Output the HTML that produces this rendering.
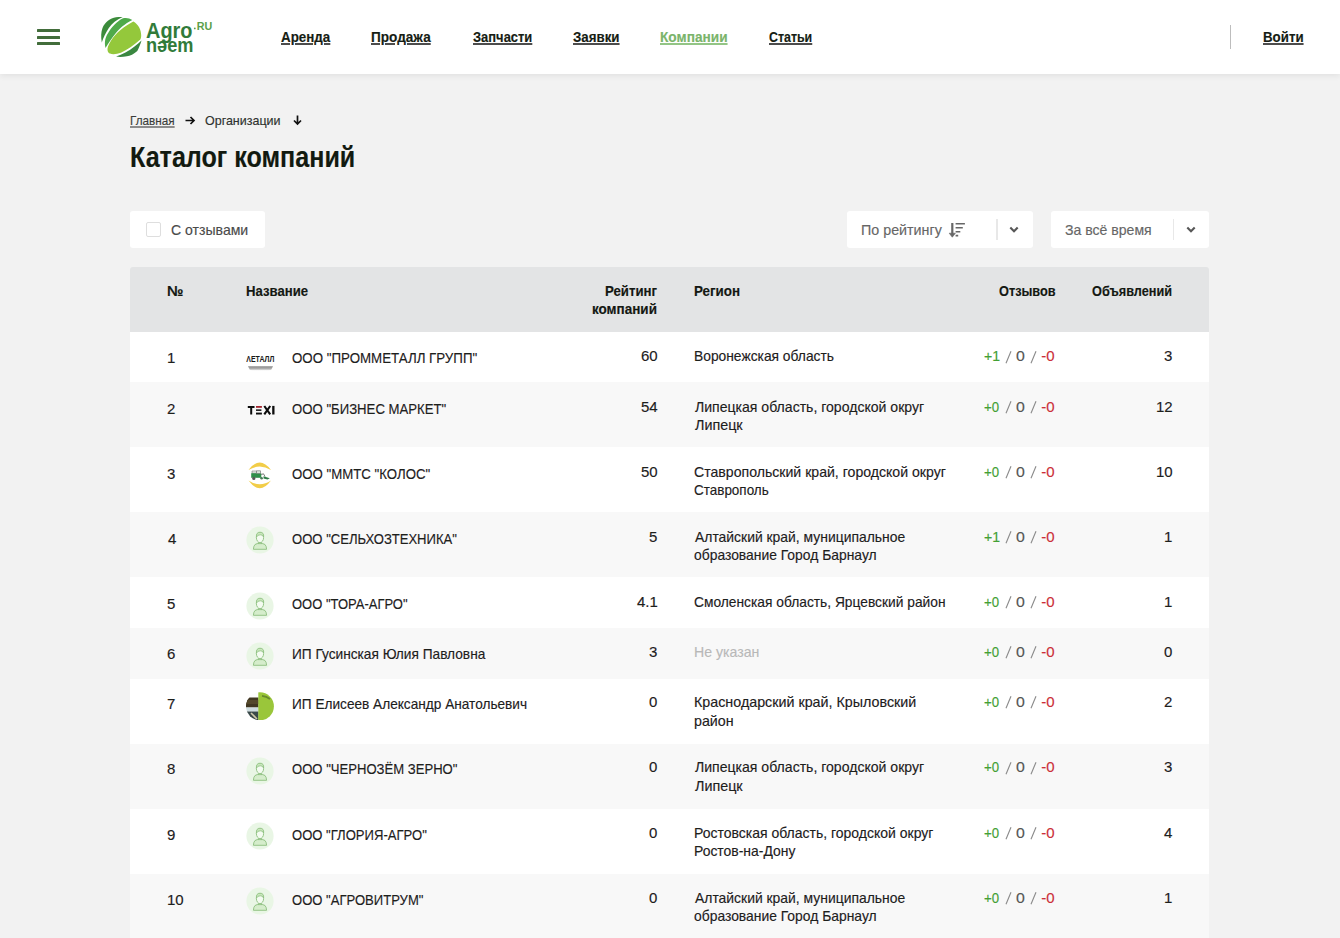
<!DOCTYPE html>
<html><head><meta charset="utf-8">
<style>
*{box-sizing:border-box;margin:0;padding:0}
html,body{width:1340px;height:938px;overflow:hidden}
body{background:#f2f2f2;font-family:"Liberation Sans",sans-serif;color:#1b1f1a;position:relative}
.hdr{position:absolute;left:0;top:0;width:1340px;height:74px;background:#fff;box-shadow:0 2px 6px rgba(0,0,0,.07)}
.burger{position:absolute;left:37px;width:23px;height:3px;background:#426d3b;border-radius:0.5px}
.vdiv{position:absolute;left:1230px;top:25px;width:1px;height:24px;background:#bdbdbd}
.abs{position:absolute;white-space:nowrap}
.abs svg,.icw svg{display:block}
.t{position:absolute;white-space:nowrap;line-height:1;font-family:"Liberation Sans",sans-serif;-webkit-text-stroke:0.15px currentColor}
.nav{text-decoration:underline;text-decoration-thickness:1.5px;text-underline-offset:1px;text-decoration-color:#4c4c4c}
.bcu{text-decoration:underline;text-decoration-color:#8c8c8c;text-decoration-thickness:1.5px;text-underline-offset:1px}
.box{position:absolute;background:#fff;border-radius:3px}
.th{position:absolute;left:130px;top:267px;width:1079px;height:65px;background:#e3e4e5;border-radius:3px 3px 0 0}
.rowbg{position:absolute;left:130px;width:1079px}
.icw{position:absolute;width:28px;height:28px}
.ico{position:absolute;left:0;top:0}
.sl{position:absolute;display:block}
</style></head><body>
<div class="hdr">
  <div class="burger" style="top:29px"></div>
  <div class="burger" style="top:36px"></div>
  <div class="burger" style="top:42px"></div>
<svg width="125" height="55" viewBox="95 10 125 55" style="position:absolute;left:95px;top:10px;display:block">
<path d="M101.8,42.5 C100.8,37 101,32 102.5,28 C105,22 110,18.5 116,17.3 C118.5,16.9 120.8,16.9 122.7,17 C116.5,19.5 112,23.5 108.8,28 C105.5,33 103.5,37.5 101.8,42.5 Z" fill="#3b8b3b"/>
<path d="M105.5,48 C104.2,42 105.2,37.5 108,33.3 C111,28 116.5,21.5 123,18.3 C126.5,17.3 129.5,18.3 132.3,20.1 C124.5,24 119.5,28.5 115.7,33.3 C112,38 108.5,43 105.5,48 Z" fill="#4faa4a"/>
<path d="M133.3,21.6 C138,24 141.5,30 141.2,36 C141.1,37.5 140.8,38.6 140.3,39.4 C134,45 127,50 120.9,52.7 C117,54.2 112.5,54.6 110,53.6 C107.5,52.6 107,49.5 108,46.5 C111,39 118,30.5 127.4,25 C129.3,23.8 131.3,22.6 133.3,21.6 Z" fill="#94c83b"/>
<path d="M141.5,40.6 C140.5,44 139,48 137.3,50.9 C134,54 130,55.8 126.9,56.3 C123,57 119,57.2 116.1,56.6 C122,54.5 129,51 134.5,46.5 C137,44.5 139.5,42.5 141.5,40.6 Z" fill="#3a8740"/>
<text x="146" y="37.8" font-family="Liberation Sans" font-weight="bold" font-size="21.5" fill="#317b3a" textLength="46.5" lengthAdjust="spacingAndGlyphs">Agro</text>
<text x="146" y="52.4" font-family="Liberation Sans" font-weight="bold" font-size="20.5" fill="#317b3a" textLength="47.5" lengthAdjust="spacingAndGlyphs">n&#x259;em</text>
<circle cx="194.8" cy="28.4" r="0.9" fill="#5aa04a"/>
<text x="196.8" y="29.5" font-family="Liberation Sans" font-weight="bold" font-size="11.5" fill="#5aa04a" textLength="15.5" lengthAdjust="spacingAndGlyphs">RU</text>
</svg>
  <div class="vdiv"></div>
</div>
<div class="abs" style="left:185px;top:115.5px"><svg width="11" height="9" viewBox="0 0 11 9"><path d="M0.5 4.5 H9 M5.5 1 L9 4.5 L5.5 8" fill="none" stroke="#111" stroke-width="1.7"/></svg></div>
<div class="abs" style="left:292.5px;top:114.5px"><svg width="9" height="11" viewBox="0 0 9 11"><path d="M4.5 0.5 V9 M1 5.5 L4.5 9 L8 5.5" fill="none" stroke="#111" stroke-width="1.7"/></svg></div>

<div class="box" style="left:130px;top:211px;width:135px;height:37px">
  <div class="abs" style="left:16px;top:11px;width:15px;height:15px;border:1px solid #dedede;border-radius:2px"></div>
</div>
<div class="box" style="left:847px;top:211px;width:186px;height:37px">
  <div class="abs" style="left:100.5px;top:11px"><svg width="18" height="18" viewBox="0 0 18 18"><path d="M4.3 1 V12" stroke="#676767" stroke-width="2.2"/><path d="M1.2 11.2 L7.4 11.2 L4.3 15.2 Z" fill="#676767" stroke="#676767" stroke-width="0.6" stroke-linejoin="round"/>
<path d="M7.6 1.7 H16.9 M7.6 5.7 H14.8 M7.6 9.7 H12.3 M7.6 13.6 H10.2" stroke="#676767" stroke-width="1.6"/></svg></div>
  <div class="abs" style="left:149px;top:8px;width:1.5px;height:21px;background:#e8e8e8"></div>
  <div class="abs" style="left:162px;top:15px"><svg width="10" height="8" viewBox="0 0 10 8"><path d="M1.3 1.6 L5 5.3 L8.7 1.6" fill="none" stroke="#575757" stroke-width="2.1"/></svg></div>
</div>
<div class="box" style="left:1051px;top:211px;width:158px;height:37px">
  <div class="abs" style="left:121.5px;top:8px;width:1.5px;height:21px;background:#e8e8e8"></div>
  <div class="abs" style="left:135px;top:15px"><svg width="10" height="8" viewBox="0 0 10 8"><path d="M1.3 1.6 L5 5.3 L8.7 1.6" fill="none" stroke="#575757" stroke-width="2.1"/></svg></div>
</div>

<div class="th"></div>
<div class="rowbg" style="top:332px;height:50px;background:#ffffff"></div>
<div class="rowbg" style="top:382px;height:65px;background:#f8f8f8"></div>
<div class="rowbg" style="top:447px;height:65px;background:#ffffff"></div>
<div class="rowbg" style="top:512px;height:65px;background:#f8f8f8"></div>
<div class="rowbg" style="top:577px;height:51px;background:#ffffff"></div>
<div class="rowbg" style="top:628px;height:51px;background:#f8f8f8"></div>
<div class="rowbg" style="top:679px;height:65px;background:#ffffff"></div>
<div class="rowbg" style="top:744px;height:65px;background:#f8f8f8"></div>
<div class="rowbg" style="top:809px;height:65px;background:#ffffff"></div>
<div class="rowbg" style="top:874px;height:65px;background:#f8f8f8"></div>
<div class="icw" style="left:246px;top:346px"><svg class="ico" width="30" height="30" viewBox="0 0 30 30">
<defs><linearGradient id="mg" x1="0" y1="0" x2="0" y2="1"><stop offset="0" stop-color="#8a8a8a"/><stop offset="0.6" stop-color="#b0b0b0"/><stop offset="1" stop-color="#f4f4f4"/></linearGradient></defs>
<text x="0.3" y="15.8" font-family="Liberation Sans" font-weight="bold" font-size="8.3" fill="#1a1a1a" textLength="28" lengthAdjust="spacingAndGlyphs">ΛЕТАЛЛ</text>
<path d="M2 20.3 H27 L25.5 23.3 Q24.5 24.5 22 24.5 H7 Q4.5 24.5 3.5 23.3 Z" fill="url(#mg)"/>
</svg></div>
<div class="icw" style="left:246px;top:396px"><svg class="ico" width="30" height="30" viewBox="0 0 30 30">
<path d="M1.8 9.9 H8.5 V11.9 H6.2 V18.5 H4.2 V11.9 H1.8 Z" fill="#0d0d0d"/>
<rect x="10" y="10" width="5.9" height="1.8" fill="#a3252e"/>
<rect x="10" y="13.4" width="5.4" height="1.5" fill="#0d0d0d"/>
<rect x="10" y="16.6" width="5.9" height="1.9" fill="#0d0d0d"/>
<path d="M18.3 10 L24.2 18.4 M24.2 10 L18.3 18.4" stroke="#0d0d0d" stroke-width="2.1"/>
<rect x="26.2" y="9.9" width="2.3" height="8.6" fill="#0d0d0d"/>
</svg></div>
<div class="icw" style="left:246px;top:461px"><svg class="ico" width="30" height="30" viewBox="0 0 30 30">
<path d="M2.5 9 Q13.8 -6 25 9 Q13.8 2 2.5 9 Z" fill="#f2cd48"/>
<path d="M2.5 19.5 Q13.8 35 25 19.5 Q13.8 27 2.5 19.5 Z" fill="#f2cd48"/>
<path d="M6 10 H10.5 V12.2 H6 Z" fill="#e8eeea" stroke="#777" stroke-width="0.6"/>
<path d="M5.2 12.2 H15.3 V16.8 H5.2 Z" fill="#2f8f4a"/>
<path d="M10.5 9.8 H14.5 V12.4 H10.5 Z" fill="#dfeee3" stroke="#666" stroke-width="0.6"/>
<circle cx="7.8" cy="17.4" r="1.6" fill="#5a5a5a"/>
<circle cx="15.6" cy="17.2" r="1.3" fill="#4a7a5a"/>
<path d="M15.3 13.5 L17.5 12.8 L19 15.5" fill="none" stroke="#555" stroke-width="0.8"/>
<path d="M17.5 15.2 L23.8 17.2 L21.5 18.4 L17.5 17.4 Z" fill="#2f7d47"/>
</svg></div>
<div class="icw" style="left:246px;top:526px"><svg class="ico" width="28" height="28" viewBox="0 0 28 28"><circle cx="14" cy="14" r="13.6" fill="#e9f6e5"/>
<path d="M7.4 23.3 L7.9 20.4 Q8.5 18 11.2 17.6 L16.8 17.6 Q19.5 18 20.1 20.4 L20.6 23.3 Z" fill="#d5edcb" stroke="#8cbf7e" stroke-width="0.9"/>
<path d="M12.4 16 V17.8 M15.6 16 V17.8" stroke="#8cbf7e" stroke-width="0.8"/>
<ellipse cx="14" cy="11.6" rx="3.6" ry="5" fill="#f4fbf1" stroke="#8cbf7e" stroke-width="0.9"/>
<path d="M10.4 11.2 Q10 6.2 14 6.2 Q18.2 6.2 17.6 11 Q16.8 8.6 14.4 8.8 Q11.6 8.6 10.4 11.2Z" fill="#c8e7bb" stroke="#8cbf7e" stroke-width="0.8"/>
</svg></div>
<div class="icw" style="left:246px;top:592px"><svg class="ico" width="28" height="28" viewBox="0 0 28 28"><circle cx="14" cy="14" r="13.6" fill="#e9f6e5"/>
<path d="M7.4 23.3 L7.9 20.4 Q8.5 18 11.2 17.6 L16.8 17.6 Q19.5 18 20.1 20.4 L20.6 23.3 Z" fill="#d5edcb" stroke="#8cbf7e" stroke-width="0.9"/>
<path d="M12.4 16 V17.8 M15.6 16 V17.8" stroke="#8cbf7e" stroke-width="0.8"/>
<ellipse cx="14" cy="11.6" rx="3.6" ry="5" fill="#f4fbf1" stroke="#8cbf7e" stroke-width="0.9"/>
<path d="M10.4 11.2 Q10 6.2 14 6.2 Q18.2 6.2 17.6 11 Q16.8 8.6 14.4 8.8 Q11.6 8.6 10.4 11.2Z" fill="#c8e7bb" stroke="#8cbf7e" stroke-width="0.8"/>
</svg></div>
<div class="icw" style="left:246px;top:642px"><svg class="ico" width="28" height="28" viewBox="0 0 28 28"><circle cx="14" cy="14" r="13.6" fill="#e9f6e5"/>
<path d="M7.4 23.3 L7.9 20.4 Q8.5 18 11.2 17.6 L16.8 17.6 Q19.5 18 20.1 20.4 L20.6 23.3 Z" fill="#d5edcb" stroke="#8cbf7e" stroke-width="0.9"/>
<path d="M12.4 16 V17.8 M15.6 16 V17.8" stroke="#8cbf7e" stroke-width="0.8"/>
<ellipse cx="14" cy="11.6" rx="3.6" ry="5" fill="#f4fbf1" stroke="#8cbf7e" stroke-width="0.9"/>
<path d="M10.4 11.2 Q10 6.2 14 6.2 Q18.2 6.2 17.6 11 Q16.8 8.6 14.4 8.8 Q11.6 8.6 10.4 11.2Z" fill="#c8e7bb" stroke="#8cbf7e" stroke-width="0.8"/>
</svg></div>
<div class="icw" style="left:246px;top:692px"><svg class="ico" width="28" height="28" viewBox="0 0 28 28">
<defs><clipPath id="pc"><circle cx="13.9" cy="14.3" r="14"/></clipPath></defs>
<g clip-path="url(#pc)">
<rect x="0" y="0" width="28" height="28" fill="#fdfdfd"/>
<rect x="0" y="5.5" width="12.5" height="10" fill="#413722"/>
<rect x="0" y="8" width="12.5" height="4" fill="#54482c"/>
<rect x="0" y="15.5" width="12.5" height="4" fill="#cfdde0"/>
<path d="M0 19.5 H12.5 V28 H0Z" fill="#3a4a4a"/>
<path d="M5 21 L11 27" stroke="#cfc8a8" stroke-width="1.6"/>
<rect x="12.3" y="0" width="16" height="28" fill="#9ac63a"/>
<path d="M16 3.8 Q20.5 4.2 24 7" stroke="#5a7a2a" stroke-width="1.8" fill="none" opacity="0.8"/>
</g></svg></div>
<div class="icw" style="left:246px;top:757px"><svg class="ico" width="28" height="28" viewBox="0 0 28 28"><circle cx="14" cy="14" r="13.6" fill="#e9f6e5"/>
<path d="M7.4 23.3 L7.9 20.4 Q8.5 18 11.2 17.6 L16.8 17.6 Q19.5 18 20.1 20.4 L20.6 23.3 Z" fill="#d5edcb" stroke="#8cbf7e" stroke-width="0.9"/>
<path d="M12.4 16 V17.8 M15.6 16 V17.8" stroke="#8cbf7e" stroke-width="0.8"/>
<ellipse cx="14" cy="11.6" rx="3.6" ry="5" fill="#f4fbf1" stroke="#8cbf7e" stroke-width="0.9"/>
<path d="M10.4 11.2 Q10 6.2 14 6.2 Q18.2 6.2 17.6 11 Q16.8 8.6 14.4 8.8 Q11.6 8.6 10.4 11.2Z" fill="#c8e7bb" stroke="#8cbf7e" stroke-width="0.8"/>
</svg></div>
<div class="icw" style="left:246px;top:822px"><svg class="ico" width="28" height="28" viewBox="0 0 28 28"><circle cx="14" cy="14" r="13.6" fill="#e9f6e5"/>
<path d="M7.4 23.3 L7.9 20.4 Q8.5 18 11.2 17.6 L16.8 17.6 Q19.5 18 20.1 20.4 L20.6 23.3 Z" fill="#d5edcb" stroke="#8cbf7e" stroke-width="0.9"/>
<path d="M12.4 16 V17.8 M15.6 16 V17.8" stroke="#8cbf7e" stroke-width="0.8"/>
<ellipse cx="14" cy="11.6" rx="3.6" ry="5" fill="#f4fbf1" stroke="#8cbf7e" stroke-width="0.9"/>
<path d="M10.4 11.2 Q10 6.2 14 6.2 Q18.2 6.2 17.6 11 Q16.8 8.6 14.4 8.8 Q11.6 8.6 10.4 11.2Z" fill="#c8e7bb" stroke="#8cbf7e" stroke-width="0.8"/>
</svg></div>
<div class="icw" style="left:246px;top:887px"><svg class="ico" width="28" height="28" viewBox="0 0 28 28"><circle cx="14" cy="14" r="13.6" fill="#e9f6e5"/>
<path d="M7.4 23.3 L7.9 20.4 Q8.5 18 11.2 17.6 L16.8 17.6 Q19.5 18 20.1 20.4 L20.6 23.3 Z" fill="#d5edcb" stroke="#8cbf7e" stroke-width="0.9"/>
<path d="M12.4 16 V17.8 M15.6 16 V17.8" stroke="#8cbf7e" stroke-width="0.8"/>
<ellipse cx="14" cy="11.6" rx="3.6" ry="5" fill="#f4fbf1" stroke="#8cbf7e" stroke-width="0.9"/>
<path d="M10.4 11.2 Q10 6.2 14 6.2 Q18.2 6.2 17.6 11 Q16.8 8.6 14.4 8.8 Q11.6 8.6 10.4 11.2Z" fill="#c8e7bb" stroke="#8cbf7e" stroke-width="0.8"/>
</svg></div>
<div class="t nav" style="left:281.08px;top:29.73px;font-size:14.5px;font-weight:bold;color:#161d14;transform:scaleX(0.9231);transform-origin:0 0;">Аренда</div>
<div class="t nav" style="left:371.06px;top:29.73px;font-size:14.5px;font-weight:bold;color:#161d14;transform:scaleX(0.9365);transform-origin:0 0;">Продажа</div>
<div class="t nav" style="left:472.71px;top:29.73px;font-size:14.5px;font-weight:bold;color:#161d14;transform:scaleX(0.8923);transform-origin:0 0;">Запчасти</div>
<div class="t nav" style="left:573.08px;top:29.73px;font-size:14.5px;font-weight:bold;color:#161d14;transform:scaleX(0.9184);transform-origin:0 0;">Заявки</div>
<div class="t nav" style="left:660.36px;top:29.73px;font-size:14.5px;font-weight:bold;color:#7ab46a;text-decoration-color:#93c585;transform:scaleX(0.9429);transform-origin:0 0;">Компании</div>
<div class="t nav" style="left:768.94px;top:29.73px;font-size:14.5px;font-weight:bold;color:#161d14;transform:scaleX(0.8551);transform-origin:0 0;">Статьи</div>
<div class="t nav" style="left:1263.08px;top:29.73px;font-size:14.5px;font-weight:bold;color:#161d14;transform:scaleX(0.9167);transform-origin:0 0;">Войти</div>
<div class="t bcu" style="left:129.50px;top:113.60px;font-size:13px;color:#3a3d3a;transform:scaleX(0.9021);transform-origin:0 0;">Главная</div>
<div class="t " style="left:204.84px;top:113.60px;font-size:13px;color:#2e312e;transform:scaleX(0.9597);transform-origin:0 0;">Организации</div>
<div class="t " style="left:129.76px;top:143.12px;font-size:28.8px;font-weight:bold;color:#121a10;transform:scaleX(0.8720);transform-origin:0 0;">Каталог компаний</div>
<div class="t " style="left:171.06px;top:222.30px;font-size:15px;color:#4a4a4a;transform:scaleX(0.9375);transform-origin:0 0;">С отзывами</div>
<div class="t " style="left:861.05px;top:222.30px;font-size:15px;color:#666666;transform:scaleX(0.9524);transform-origin:0 0;">По рейтингу</div>
<div class="t " style="left:1065.06px;top:222.30px;font-size:15px;color:#666666;transform:scaleX(0.9378);transform-origin:0 0;">За всё время</div>
<div class="t " style="left:166.79px;top:283.73px;font-size:14.5px;font-weight:bold;color:#141812;transform:scaleX(1.0143);transform-origin:0 0;">№</div>
<div class="t " style="left:246.29px;top:283.73px;font-size:14.5px;font-weight:bold;color:#141812;transform:scaleX(0.9075);transform-origin:0 0;">Название</div>
<div class="t " style="left:605.29px;top:283.73px;font-size:14.5px;font-weight:bold;color:#141812;transform:scaleX(0.9125);transform-origin:0 0;">Рейтинг</div>
<div class="t " style="left:592.47px;top:302.33px;font-size:14.5px;font-weight:bold;color:#141812;transform:scaleX(0.9294);transform-origin:0 0;">компаний</div>
<div class="t " style="left:694.08px;top:283.73px;font-size:14.5px;font-weight:bold;color:#141812;transform:scaleX(0.9229);transform-origin:0 0;">Регион</div>
<div class="t " style="left:998.52px;top:283.73px;font-size:14.5px;font-weight:bold;color:#141812;transform:scaleX(0.8778);transform-origin:0 0;">Отзывов</div>
<div class="t " style="left:1092.12px;top:283.73px;font-size:14.5px;font-weight:bold;color:#141812;transform:scaleX(0.8756);transform-origin:0 0;">Объявлений</div>
<div class="t " style="left:167.00px;top:350.30px;font-size:15px;color:#1d201c;">1</div>
<div class="t " style="left:292.41px;top:350.30px;font-size:15px;color:#1d201c;transform:scaleX(0.8874);transform-origin:0 0;">ООО "ПРОММЕТАЛЛ ГРУПП"</div>
<div class="t " style="left:641.00px;top:348.30px;font-size:15px;color:#1d201c;">60</div>
<div class="t " style="left:694.08px;top:348.30px;font-size:15px;color:#1d201c;transform:scaleX(0.9205);transform-origin:0 0;">Воронежская область</div>
<div class="t " style="left:983.76px;top:348.30px;font-size:15px;color:#43a034;transform:scaleX(0.9400);transform-origin:0 0;">+1</div>
<div class="t " style="left:1016.24px;top:348.30px;font-size:15px;color:#555555;transform:scaleX(1.0571);transform-origin:0 0;">0</div>
<div class="t " style="left:1041.20px;top:348.30px;font-size:15px;color:#cc2f3a;">-0</div>
<div class="t " style="left:1164.00px;top:348.30px;font-size:15px;color:#1d201c;">3</div>
<div class="t " style="left:167.00px;top:400.60px;font-size:15px;color:#1d201c;">2</div>
<div class="t " style="left:292.42px;top:400.60px;font-size:15px;color:#1d201c;transform:scaleX(0.8776);transform-origin:0 0;">ООО "БИЗНЕС МАРКЕТ"</div>
<div class="t " style="left:641.00px;top:398.60px;font-size:15px;color:#1d201c;">54</div>
<div class="t " style="left:695.00px;top:398.60px;font-size:15px;color:#1d201c;transform:scaleX(0.9373);transform-origin:0 0;">Липецкая область, городской округ</div>
<div class="t " style="left:695.00px;top:417.00px;font-size:15px;color:#1d201c;transform:scaleX(0.9560);transform-origin:0 0;">Липецк</div>
<div class="t " style="left:983.82px;top:398.60px;font-size:15px;color:#43a034;transform:scaleX(0.8812);transform-origin:0 0;">+0</div>
<div class="t " style="left:1016.24px;top:398.60px;font-size:15px;color:#555555;transform:scaleX(1.0571);transform-origin:0 0;">0</div>
<div class="t " style="left:1041.20px;top:398.60px;font-size:15px;color:#cc2f3a;">-0</div>
<div class="t " style="left:1156.00px;top:398.60px;font-size:15px;color:#1d201c;">12</div>
<div class="t " style="left:167.00px;top:465.60px;font-size:15px;color:#1d201c;">3</div>
<div class="t " style="left:292.42px;top:465.60px;font-size:15px;color:#1d201c;transform:scaleX(0.8819);transform-origin:0 0;">ООО "ММТС "КОЛОС"</div>
<div class="t " style="left:641.00px;top:463.60px;font-size:15px;color:#1d201c;">50</div>
<div class="t " style="left:694.06px;top:463.60px;font-size:15px;color:#1d201c;transform:scaleX(0.9401);transform-origin:0 0;">Ставропольский край, городской округ</div>
<div class="t " style="left:694.10px;top:482.00px;font-size:15px;color:#1d201c;transform:scaleX(0.8976);transform-origin:0 0;">Ставрополь</div>
<div class="t " style="left:983.82px;top:463.60px;font-size:15px;color:#43a034;transform:scaleX(0.8812);transform-origin:0 0;">+0</div>
<div class="t " style="left:1016.24px;top:463.60px;font-size:15px;color:#555555;transform:scaleX(1.0571);transform-origin:0 0;">0</div>
<div class="t " style="left:1041.20px;top:463.60px;font-size:15px;color:#cc2f3a;">-0</div>
<div class="t " style="left:1156.00px;top:463.60px;font-size:15px;color:#1d201c;">10</div>
<div class="t " style="left:168.00px;top:530.70px;font-size:15px;color:#1d201c;">4</div>
<div class="t " style="left:292.43px;top:530.70px;font-size:15px;color:#1d201c;transform:scaleX(0.8723);transform-origin:0 0;">ООО "СЕЛЬХОЗТЕХНИКА"</div>
<div class="t " style="left:649.00px;top:528.70px;font-size:15px;color:#1d201c;">5</div>
<div class="t " style="left:695.00px;top:528.70px;font-size:15px;color:#1d201c;transform:scaleX(0.9270);transform-origin:0 0;">Алтайский край, муниципальное</div>
<div class="t " style="left:694.08px;top:547.10px;font-size:15px;color:#1d201c;transform:scaleX(0.9250);transform-origin:0 0;">образование Город Барнаул</div>
<div class="t " style="left:983.76px;top:528.70px;font-size:15px;color:#43a034;transform:scaleX(0.9400);transform-origin:0 0;">+1</div>
<div class="t " style="left:1016.24px;top:528.70px;font-size:15px;color:#555555;transform:scaleX(1.0571);transform-origin:0 0;">0</div>
<div class="t " style="left:1041.20px;top:528.70px;font-size:15px;color:#cc2f3a;">-0</div>
<div class="t " style="left:1164.00px;top:528.70px;font-size:15px;color:#1d201c;">1</div>
<div class="t " style="left:167.00px;top:595.80px;font-size:15px;color:#1d201c;">5</div>
<div class="t " style="left:292.43px;top:595.80px;font-size:15px;color:#1d201c;transform:scaleX(0.8659);transform-origin:0 0;">ООО "ТОРА-АГРО"</div>
<div class="t " style="left:637.00px;top:593.80px;font-size:15px;color:#1d201c;">4.1</div>
<div class="t " style="left:694.08px;top:593.80px;font-size:15px;color:#1d201c;transform:scaleX(0.9184);transform-origin:0 0;">Смоленская область, Ярцевский район</div>
<div class="t " style="left:983.82px;top:593.80px;font-size:15px;color:#43a034;transform:scaleX(0.8812);transform-origin:0 0;">+0</div>
<div class="t " style="left:1016.24px;top:593.80px;font-size:15px;color:#555555;transform:scaleX(1.0571);transform-origin:0 0;">0</div>
<div class="t " style="left:1041.20px;top:593.80px;font-size:15px;color:#cc2f3a;">-0</div>
<div class="t " style="left:1164.00px;top:593.80px;font-size:15px;color:#1d201c;">1</div>
<div class="t " style="left:167.00px;top:646.00px;font-size:15px;color:#1d201c;">6</div>
<div class="t " style="left:292.39px;top:646.00px;font-size:15px;color:#1d201c;transform:scaleX(0.9123);transform-origin:0 0;">ИП Гусинская Юлия Павловна</div>
<div class="t " style="left:649.00px;top:644.00px;font-size:15px;color:#1d201c;">3</div>
<div class="t " style="left:694.06px;top:644.00px;font-size:15px;color:#b8b8b8;transform:scaleX(0.9412);transform-origin:0 0;">Не указан</div>
<div class="t " style="left:983.82px;top:644.00px;font-size:15px;color:#43a034;transform:scaleX(0.8812);transform-origin:0 0;">+0</div>
<div class="t " style="left:1016.24px;top:644.00px;font-size:15px;color:#555555;transform:scaleX(1.0571);transform-origin:0 0;">0</div>
<div class="t " style="left:1041.20px;top:644.00px;font-size:15px;color:#cc2f3a;">-0</div>
<div class="t " style="left:1164.00px;top:644.00px;font-size:15px;color:#1d201c;">0</div>
<div class="t " style="left:167.00px;top:696.15px;font-size:15px;color:#1d201c;">7</div>
<div class="t " style="left:292.39px;top:696.15px;font-size:15px;color:#1d201c;transform:scaleX(0.9093);transform-origin:0 0;">ИП Елисеев Александр Анатольевич</div>
<div class="t " style="left:649.00px;top:694.15px;font-size:15px;color:#1d201c;">0</div>
<div class="t " style="left:694.05px;top:694.15px;font-size:15px;color:#1d201c;transform:scaleX(0.9524);transform-origin:0 0;">Краснодарский край, Крыловский</div>
<div class="t " style="left:694.05px;top:712.55px;font-size:15px;color:#1d201c;transform:scaleX(0.9500);transform-origin:0 0;">район</div>
<div class="t " style="left:983.82px;top:694.15px;font-size:15px;color:#43a034;transform:scaleX(0.8812);transform-origin:0 0;">+0</div>
<div class="t " style="left:1016.24px;top:694.15px;font-size:15px;color:#555555;transform:scaleX(1.0571);transform-origin:0 0;">0</div>
<div class="t " style="left:1041.20px;top:694.15px;font-size:15px;color:#cc2f3a;">-0</div>
<div class="t " style="left:1164.00px;top:694.15px;font-size:15px;color:#1d201c;">2</div>
<div class="t " style="left:167.00px;top:761.30px;font-size:15px;color:#1d201c;">8</div>
<div class="t " style="left:292.43px;top:761.30px;font-size:15px;color:#1d201c;transform:scaleX(0.8723);transform-origin:0 0;">ООО "ЧЕРНОЗЁМ ЗЕРНО"</div>
<div class="t " style="left:649.00px;top:759.30px;font-size:15px;color:#1d201c;">0</div>
<div class="t " style="left:695.00px;top:759.30px;font-size:15px;color:#1d201c;transform:scaleX(0.9373);transform-origin:0 0;">Липецкая область, городской округ</div>
<div class="t " style="left:695.00px;top:777.70px;font-size:15px;color:#1d201c;transform:scaleX(0.9560);transform-origin:0 0;">Липецк</div>
<div class="t " style="left:983.82px;top:759.30px;font-size:15px;color:#43a034;transform:scaleX(0.8812);transform-origin:0 0;">+0</div>
<div class="t " style="left:1016.24px;top:759.30px;font-size:15px;color:#555555;transform:scaleX(1.0571);transform-origin:0 0;">0</div>
<div class="t " style="left:1041.20px;top:759.30px;font-size:15px;color:#cc2f3a;">-0</div>
<div class="t " style="left:1164.00px;top:759.30px;font-size:15px;color:#1d201c;">3</div>
<div class="t " style="left:167.00px;top:826.50px;font-size:15px;color:#1d201c;">9</div>
<div class="t " style="left:292.43px;top:826.50px;font-size:15px;color:#1d201c;transform:scaleX(0.8712);transform-origin:0 0;">ООО "ГЛОРИЯ-АГРО"</div>
<div class="t " style="left:649.00px;top:824.50px;font-size:15px;color:#1d201c;">0</div>
<div class="t " style="left:694.07px;top:824.50px;font-size:15px;color:#1d201c;transform:scaleX(0.9325);transform-origin:0 0;">Ростовская область, городской округ</div>
<div class="t " style="left:694.07px;top:842.90px;font-size:15px;color:#1d201c;transform:scaleX(0.9278);transform-origin:0 0;">Ростов-на-Дону</div>
<div class="t " style="left:983.82px;top:824.50px;font-size:15px;color:#43a034;transform:scaleX(0.8812);transform-origin:0 0;">+0</div>
<div class="t " style="left:1016.24px;top:824.50px;font-size:15px;color:#555555;transform:scaleX(1.0571);transform-origin:0 0;">0</div>
<div class="t " style="left:1041.20px;top:824.50px;font-size:15px;color:#cc2f3a;">-0</div>
<div class="t " style="left:1164.00px;top:824.50px;font-size:15px;color:#1d201c;">4</div>
<div class="t " style="left:167.00px;top:891.75px;font-size:15px;color:#1d201c;">10</div>
<div class="t " style="left:292.43px;top:891.75px;font-size:15px;color:#1d201c;transform:scaleX(0.8705);transform-origin:0 0;">ООО "АГРОВИТРУМ"</div>
<div class="t " style="left:649.00px;top:889.75px;font-size:15px;color:#1d201c;">0</div>
<div class="t " style="left:695.00px;top:889.75px;font-size:15px;color:#1d201c;transform:scaleX(0.9270);transform-origin:0 0;">Алтайский край, муниципальное</div>
<div class="t " style="left:694.08px;top:908.15px;font-size:15px;color:#1d201c;transform:scaleX(0.9250);transform-origin:0 0;">образование Город Барнаул</div>
<div class="t " style="left:983.82px;top:889.75px;font-size:15px;color:#43a034;transform:scaleX(0.8812);transform-origin:0 0;">+0</div>
<div class="t " style="left:1016.24px;top:889.75px;font-size:15px;color:#555555;transform:scaleX(1.0571);transform-origin:0 0;">0</div>
<div class="t " style="left:1041.20px;top:889.75px;font-size:15px;color:#cc2f3a;">-0</div>
<div class="t " style="left:1164.00px;top:889.75px;font-size:15px;color:#1d201c;">1</div>
<svg class="sl" style="left:1004px;top:349.5px" width="9" height="14"><path d="M2 13.3 L7 1.2" stroke="#8a8a8a" stroke-width="1.1"/></svg>
<svg class="sl" style="left:1029px;top:349.5px" width="9" height="14"><path d="M2 13.3 L7 1.2" stroke="#8a8a8a" stroke-width="1.1"/></svg>
<svg class="sl" style="left:1004px;top:399.8px" width="9" height="14"><path d="M2 13.3 L7 1.2" stroke="#8a8a8a" stroke-width="1.1"/></svg>
<svg class="sl" style="left:1029px;top:399.8px" width="9" height="14"><path d="M2 13.3 L7 1.2" stroke="#8a8a8a" stroke-width="1.1"/></svg>
<svg class="sl" style="left:1004px;top:464.8px" width="9" height="14"><path d="M2 13.3 L7 1.2" stroke="#8a8a8a" stroke-width="1.1"/></svg>
<svg class="sl" style="left:1029px;top:464.8px" width="9" height="14"><path d="M2 13.3 L7 1.2" stroke="#8a8a8a" stroke-width="1.1"/></svg>
<svg class="sl" style="left:1004px;top:529.9px" width="9" height="14"><path d="M2 13.3 L7 1.2" stroke="#8a8a8a" stroke-width="1.1"/></svg>
<svg class="sl" style="left:1029px;top:529.9px" width="9" height="14"><path d="M2 13.3 L7 1.2" stroke="#8a8a8a" stroke-width="1.1"/></svg>
<svg class="sl" style="left:1004px;top:595.0px" width="9" height="14"><path d="M2 13.3 L7 1.2" stroke="#8a8a8a" stroke-width="1.1"/></svg>
<svg class="sl" style="left:1029px;top:595.0px" width="9" height="14"><path d="M2 13.3 L7 1.2" stroke="#8a8a8a" stroke-width="1.1"/></svg>
<svg class="sl" style="left:1004px;top:645.2px" width="9" height="14"><path d="M2 13.3 L7 1.2" stroke="#8a8a8a" stroke-width="1.1"/></svg>
<svg class="sl" style="left:1029px;top:645.2px" width="9" height="14"><path d="M2 13.3 L7 1.2" stroke="#8a8a8a" stroke-width="1.1"/></svg>
<svg class="sl" style="left:1004px;top:695.4px" width="9" height="14"><path d="M2 13.3 L7 1.2" stroke="#8a8a8a" stroke-width="1.1"/></svg>
<svg class="sl" style="left:1029px;top:695.4px" width="9" height="14"><path d="M2 13.3 L7 1.2" stroke="#8a8a8a" stroke-width="1.1"/></svg>
<svg class="sl" style="left:1004px;top:760.5px" width="9" height="14"><path d="M2 13.3 L7 1.2" stroke="#8a8a8a" stroke-width="1.1"/></svg>
<svg class="sl" style="left:1029px;top:760.5px" width="9" height="14"><path d="M2 13.3 L7 1.2" stroke="#8a8a8a" stroke-width="1.1"/></svg>
<svg class="sl" style="left:1004px;top:825.7px" width="9" height="14"><path d="M2 13.3 L7 1.2" stroke="#8a8a8a" stroke-width="1.1"/></svg>
<svg class="sl" style="left:1029px;top:825.7px" width="9" height="14"><path d="M2 13.3 L7 1.2" stroke="#8a8a8a" stroke-width="1.1"/></svg>
<svg class="sl" style="left:1004px;top:891.0px" width="9" height="14"><path d="M2 13.3 L7 1.2" stroke="#8a8a8a" stroke-width="1.1"/></svg>
<svg class="sl" style="left:1029px;top:891.0px" width="9" height="14"><path d="M2 13.3 L7 1.2" stroke="#8a8a8a" stroke-width="1.1"/></svg>
</body></html>
